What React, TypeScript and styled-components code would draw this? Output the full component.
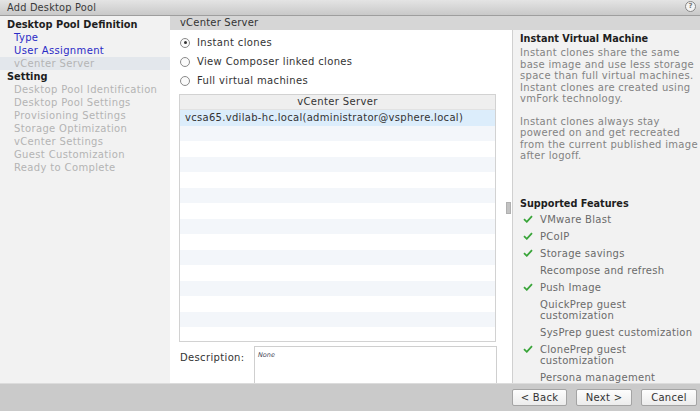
import styled, { createGlobalStyle } from "styled-components";

const Global = createGlobalStyle`
    html, body {
        margin: 0;
        padding: 0;
    }
    body {
        font-family: "DejaVu Sans", Verdana, sans-serif;
        font-size: 10px;
        letter-spacing: 0.35px;
        color: #333;
        background: #cacaca;
    }
`

const Dialog = styled.div`
    width: 700px;
    height: 411px;
    display: flex;
    flex-direction: column;
    overflow: hidden;
`

const TitleBar = styled.header`
    height: 15px;
    flex: none;
    display: flex;
    align-items: center;
    justify-content: space-between;
    padding: 0 4px 0 7px;
    background: linear-gradient(#e4e4e4, #c9c9c9);
    border-bottom: 1px solid #9e9e9e;
    color: #3a3a3a;
    font-size: 9.8px;
    letter-spacing: 0.2px;
`

const HelpIcon = styled.span`
    width: 9px;
    height: 9px;
    border-radius: 50%;
    border: 1px solid #888;
    background: #f4f4f4;
    color: #777;
    font-size: 7px;
    font-weight: bold;
    letter-spacing: 0;
    display: flex;
    align-items: center;
    justify-content: center;
    margin-top: -3px;
`

const Body = styled.div`
    flex: 1;
    display: flex;
    min-height: 0;
`

const Nav = styled.nav`
    width: 170px;
    flex: none;
    background: #f2f2f2;
    padding-top: 2px;
`

const NavGroup = styled.div`
    font-weight: bold;
    font-size: 9.8px;
    letter-spacing: 0;
    color: #1e1e1e;
    padding-left: 7px;
    line-height: 13px;
`

const NavItem = styled.div<{ $kind: "link" | "current" | "disabled" }>`
    padding-left: 14px;
    line-height: 13px;
    white-space: nowrap;
    color: ${p => p.$kind === "link" ? "#2b2bc6" : "#b4b4b4"};
    background: ${p => p.$kind === "current" ? "#e3e7ec" : "transparent"};
`

const Content = styled.div`
    flex: 1;
    display: flex;
    flex-direction: column;
    min-width: 0;
`

const SectionHeader = styled.div`
    height: 14px;
    flex: none;
    background: #d6d6d6;
    padding-left: 10px;
    line-height: 14px;
    color: #333;
    letter-spacing: 0.2px;
`

const Columns = styled.div`
    flex: 1;
    display: flex;
    min-height: 0;
`

const Main = styled.div`
    width: 342px;
    flex: none;
    background: #fff;
    display: flex;
    flex-direction: column;
    padding: 3px 0 0 9px;
    box-sizing: border-box;
    position: relative;
`

const RadioRow = styled.label`
    display: flex;
    align-items: center;
    gap: 7px;
    height: 19px;
    padding-left: 1px;
    color: #333;
    white-space: nowrap;
`

const Radio = styled.span<{ $on?: boolean }>`
    width: 8px;
    height: 8px;
    flex: none;
    border-radius: 50%;
    border: 1px solid #8a8a8a;
    background: #fafafa;
    display: flex;
    align-items: center;
    justify-content: center;
    &::after {
        content: "";
        width: 3px;
        height: 3px;
        border-radius: 50%;
        background: ${p => p.$on ? "#333" : "transparent"};
    }
`

const Table = styled.div`
    width: 317px;
    height: 248px;
    margin-top: 4px;
    border: 1px solid #d2d2d2;
    box-sizing: border-box;
    overflow: hidden;
    flex: none;
`

const TableHead = styled.div`
    height: 14px;
    line-height: 14px;
    text-align: center;
    background: #efefef;
    border-bottom: 1px solid #e2e2e2;
    color: #333;
`

const Row = styled.div<{ $index: number; $selected?: boolean }>`
    height: 15.5px;
    line-height: 15.5px;
    padding-left: 5px;
    letter-spacing: 0.3px;
    color: #333;
    white-space: nowrap;
    background: ${p => p.$selected ? "#dcedfb" : p.$index % 2 === 1 ? "#f3f6fa" : "#fff"};
    &:first-of-type {
        height: 17px;
        line-height: 17px;
    }
`

const ScrollThumb = styled.div`
    position: absolute;
    right: 1px;
    top: 172px;
    width: 5px;
    height: 12px;
    background: #c2c2c2;
    border: 1px solid #b0b0b0;
    box-sizing: border-box;
`

const DescriptionRow = styled.div`
    display: flex;
    margin-top: 4px;
    flex: 1;
`

const DescriptionLabel = styled.div`
    width: 74px;
    padding-top: 6px;
    padding-left: 1px;
    color: #333;
`

const DescriptionBox = styled.div`
    width: 243px;
    border: 1px solid #cfcfcf;
    border-bottom: none;
    padding: 4px 3px;
    font-size: 6.5px;
    letter-spacing: 0;
    font-style: italic;
    color: #445;
    box-sizing: border-box;
`

const Side = styled.aside`
    flex: 1;
    background: #f2f2f2;
    border-left: 1px solid #d0d0d0;
    padding: 2px 0 0 7px;
    display: flex;
    flex-direction: column;
    overflow: hidden;
    letter-spacing: 0.3px;
`

const SideTitle = styled.div`
    font-weight: bold;
    color: #1e1e1e;
    font-size: 9.7px;
    letter-spacing: 0;
    line-height: 14px;
    margin-bottom: 1px;
`

const SideText = styled.p`
    margin: 0 0 11px;
    color: #838383;
    line-height: 11.5px;
`

const Features = styled.div`
    margin-top: 24px;
`

const FeatureList = styled.ul`
    list-style: none;
    margin: 1px 0 0;
    padding: 0;
`

const Feature = styled.li`
    display: flex;
    align-items: flex-start;
    color: #6a6a6a;
    line-height: 11.5px;
    padding: 2.7px 0;
`

const CheckSlot = styled.span`
    width: 20px;
    flex: none;
    display: flex;
    padding-top: 1px;
    padding-left: 3px;
    box-sizing: border-box;
`

const Footer = styled.footer`
    height: 27px;
    flex: none;
    background: #cacaca;
    border-top: 1px solid #dcdcdc;
    display: flex;
    justify-content: flex-end;
    align-items: center;
    gap: 9px;
    padding-right: 3px;
`

const Button = styled.button<{ $w: number }>`
    width: ${p => p.$w}px;
    height: 17px;
    padding: 0;
    display: flex;
    align-items: center;
    justify-content: center;
    white-space: nowrap;
    font-family: inherit;
    font-size: 10px;
    line-height: 15px;
    letter-spacing: 0.3px;
    color: #333;
    background: linear-gradient(#fdfdfd, #ececec);
    border: 1px solid #a4a4a4;
    border-radius: 2px;
`

function Check() {
    return <svg width="10" height="8" viewBox="0 0 10 8">
        <path d="M1 4.2 L3.8 6.8 L9 1.2" fill="none" stroke="#3aa53a" strokeWidth="1.8" />
    </svg>
}

const features: { name: string; ok: boolean }[] = [
    { name: "VMware Blast", ok: true },
    { name: "PCoIP", ok: true },
    { name: "Storage savings", ok: true },
    { name: "Recompose and refresh", ok: false },
    { name: "Push Image", ok: true },
    { name: "QuickPrep guest customization", ok: false },
    { name: "SysPrep guest customization", ok: false },
    { name: "ClonePrep guest customization", ok: true },
    { name: "Persona management", ok: false },
]

export default function App() {
    const rows = Array.from({ length: 15 }, (_, i) => i);
    return <Dialog>
        <Global />
        <TitleBar>
            <span>Add Desktop Pool</span>
            <HelpIcon>?</HelpIcon>
        </TitleBar>
        <Body>
            <Nav>
                <NavGroup>Desktop Pool Definition</NavGroup>
                <NavItem $kind="link">Type</NavItem>
                <NavItem $kind="link">User Assignment</NavItem>
                <NavItem $kind="current">vCenter Server</NavItem>
                <NavGroup>Setting</NavGroup>
                <NavItem $kind="disabled">Desktop Pool Identification</NavItem>
                <NavItem $kind="disabled">Desktop Pool Settings</NavItem>
                <NavItem $kind="disabled">Provisioning Settings</NavItem>
                <NavItem $kind="disabled">Storage Optimization</NavItem>
                <NavItem $kind="disabled">vCenter Settings</NavItem>
                <NavItem $kind="disabled">Guest Customization</NavItem>
                <NavItem $kind="disabled">Ready to Complete</NavItem>
            </Nav>
            <Content>
                <SectionHeader>vCenter Server</SectionHeader>
                <Columns>
                    <Main>
                        <RadioRow><Radio $on />Instant clones</RadioRow>
                        <RadioRow><Radio />View Composer linked clones</RadioRow>
                        <RadioRow><Radio />Full virtual machines</RadioRow>
                        <Table>
                            <TableHead>vCenter Server</TableHead>
                            {rows.map(i => <Row key={i} $index={i} $selected={i === 0}>
                                {i === 0 ? "vcsa65.vdilab-hc.local(administrator@vsphere.local)" : ""}
                            </Row>)}
                        </Table>
                        <DescriptionRow>
                            <DescriptionLabel>Description:</DescriptionLabel>
                            <DescriptionBox>None</DescriptionBox>
                        </DescriptionRow>
                        <ScrollThumb />
                    </Main>
                    <Side>
                        <SideTitle>Instant Virtual Machine</SideTitle>
                        <SideText>
                            Instant clones share the same base image and use less storage space than full virtual machines. Instant clones are created using vmFork technology.
                        </SideText>
                        <SideText>
                            Instant clones always stay powered on and get recreated from the current published image after logoff.
                        </SideText>
                        <Features>
                            <SideTitle>Supported Features</SideTitle>
                            <FeatureList>
                                {features.map(f => <Feature key={f.name}>
                                    <CheckSlot>{f.ok && <Check />}</CheckSlot>
                                    <span>{f.name}</span>
                                </Feature>)}
                            </FeatureList>
                        </Features>
                    </Side>
                </Columns>
            </Content>
        </Body>
        <Footer>
            <Button $w={55}>&lt; Back</Button>
            <Button $w={56}>Next &gt;</Button>
            <Button $w={56}>Cancel</Button>
        </Footer>
    </Dialog>
}
